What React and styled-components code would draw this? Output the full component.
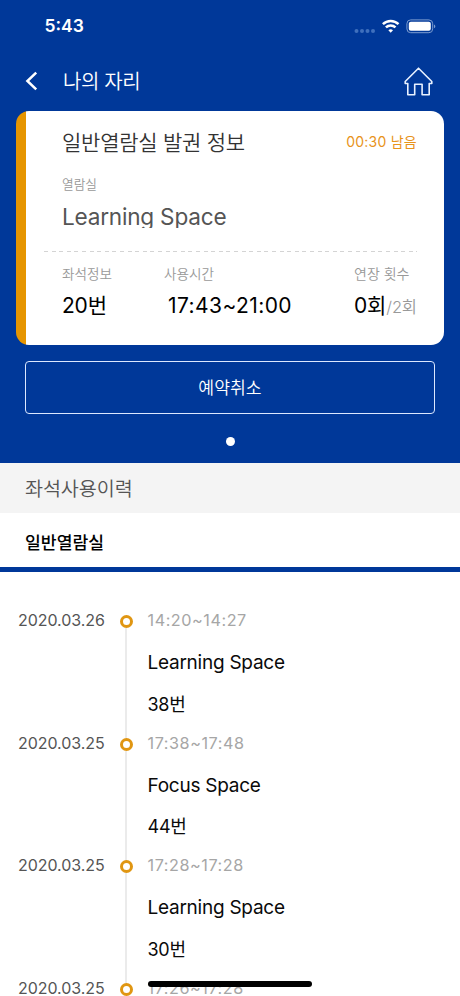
import React from "react";
import styled, { createGlobalStyle } from "styled-components";

const GlobalStyle = createGlobalStyle`
  * {
    box-sizing: border-box;
    margin: 0;
    padding: 0;
  }

  body {
    background: #fff;
    font-family: Inter, "Noto Sans CJK KR", sans-serif;
    color: #0a0a0a;
  }
`;

const Screen = styled.div`
  position: relative;
  width: 460px;
  height: 996px;
  overflow: hidden;
  background: #fff;
`;

const Top = styled.header`
  height: 463px;
  background: #003899;
  color: #fff;
`;

const StatusBar = styled.div`
  display: flex;
  justify-content: space-between;
  align-items: center;
  height: 51px;
  padding: 0 24px 0 44.5px;
`;

const Clock = styled.span`
  font-size: 17.5px;
  line-height: 20px;
  font-weight: 600;
`;

const NavBar = styled.nav`
  display: flex;
  align-items: center;
  height: 60px;
  padding: 0 27px 0 25px;
`;

const NavTitle = styled.h1`
  flex: 1;
  margin-left: 25px;
  padding-top: 2px;
  font-size: 20px;
  line-height: 28px;
  font-weight: 350;
  letter-spacing: -0.4px;
`;

const Card = styled.section`
  width: 428px;
  height: 234px;
  margin-left: 16px;
  padding: 17px 27px 0 28px;
  border-radius: 13px;
  background: linear-gradient(90deg, #e69500 9.6px, #fff 9.6px);
`;

const CardHead = styled.div`
  display: flex;
  justify-content: space-between;
  align-items: center;
  height: 30px;
  padding-left: 18px;
`;

const CardTitle = styled.h2`
  font-size: 21px;
  line-height: 30px;
  font-weight: 350;
  letter-spacing: -0.25px;
  color: #333;
`;

const Remaining = styled.span`
  padding-bottom: 2px;
  font-size: 14px;
  line-height: 20px;
  letter-spacing: 0.25px;
  color: #e8931a;
`;

const Label = styled.div`
  font-size: ${(props) => props.$size || 13.6}px;
  line-height: 20px;
  font-weight: 350;
  color: #999;
`;

const Room = styled.div`
  padding: 17px 0 0 18px;
`;

const RoomName = styled.div`
  height: 25px;
  margin-top: 8px;
  overflow: hidden;
  font-size: 22.6px;
  line-height: 27.6px;
  letter-spacing: -0.22px;
  color: #555;
`;

const Dashes = styled.div`
  height: 1px;
  margin-top: 22.5px;
  background: repeating-linear-gradient(90deg, #d4d4d4 0 4px, transparent 4px 7.6px);
`;

const Details = styled.div`
  display: grid;
  grid-template-columns: 102px 1fr 63px;
  padding: 12.5px 0 0 18px;
`;

const Value = styled.div`
  margin-top: 7px;
  padding-left: ${(props) => props.$indent || 0}px;
  font-size: 21px;
  line-height: 30px;
  letter-spacing: ${(props) => props.$spacing || 0}px;
  white-space: nowrap;
  color: #000;

  small {
    font-size: 16.5px;
    font-weight: 350;
    color: #999;
  }
`;

const CancelButton = styled.button`
  display: block;
  width: 410px;
  height: 53px;
  margin: 16px 0 0 25px;
  padding-bottom: 2px;
  border: 1px solid #dce8ff;
  border-radius: 4px;
  background: transparent;
  font-family: inherit;
  font-size: 17.2px;
  font-weight: 350;
  color: #fff;
`;

const PageDot = styled.div`
  width: 9px;
  height: 9px;
  margin: 22.5px 0 0 225.5px;
  border-radius: 50%;
  background: #fff;
`;

const HistoryTitle = styled.h2`
  height: 50px;
  padding-left: 25px;
  background: #f4f4f4;
  font-size: 19.6px;
  line-height: 52px;
  font-weight: 350;
  letter-spacing: -0.1px;
  color: #555;
`;

const Tab = styled.div`
  height: 59px;
  padding-left: 25px;
  border-bottom: 5px solid #003899;
  font-size: 17.2px;
  line-height: 60px;
  font-weight: 500;
  color: #000;
`;

const History = styled.ul`
  padding: 34px 0 0 18px;
  list-style: none;
`;

const Entry = styled.li`
  display: grid;
  grid-template-columns: 102px 13px 1fr;
  height: 122.5px;
`;

const EntryDate = styled.span`
  font-size: 16px;
  line-height: 28px;
  letter-spacing: -0.06px;
  color: #555;
`;

const Rail = styled.div`
  height: 122.5px;
  padding-top: 9px;

  &::after {
    content: "";
    display: block;
    width: 2px;
    height: 110px;
    margin-left: 5px;
    background: #ebebeb;
  }
`;

const Ring = styled.div`
  width: 13px;
  height: 13px;
  border: 3px solid #e09612;
  border-radius: 50%;
  background: #fff;
`;

const EntryBody = styled.div`
  padding-left: 14.5px;
`;

const EntryTime = styled.div`
  font-size: 16.2px;
  line-height: 28px;
  letter-spacing: 0.55px;
  color: #a6a6a6;
`;

const EntryText = styled.div`
  margin-top: 14px;
  font-size: ${(props) => props.$size || 19}px;
  line-height: 29px;
  letter-spacing: -0.25px;

  & + & {
    margin-top: 12.5px;
  }
`;

const HomeIndicator = styled.div`
  position: absolute;
  left: 148px;
  bottom: 9px;
  width: 164px;
  height: 6px;
  border-radius: 3px;
  background: #000;
`;

const entries = [
  { date: "2020.03.26", time: "14:20~14:27", room: "Learning Space", seat: "38번" },
  { date: "2020.03.25", time: "17:38~17:48", room: "Focus Space", seat: "44번" },
  { date: "2020.03.25", time: "17:28~17:28", room: "Learning Space", seat: "30번" },
  { date: "2020.03.25", time: "17:26~17:28", room: "", seat: "" },
];

const StatusIcons = () => (
  <svg width="82" height="16" viewBox="354 17 82 16" fill="#fff">
    <g fill="#3f70bd">
      <circle cx="356.5" cy="30" r="2" />
      <circle cx="362" cy="30" r="2" />
      <circle cx="367.5" cy="30" r="2" />
      <circle cx="373" cy="30" r="2" />
    </g>
    <g fill="none" stroke="#fff" strokeWidth="2.5">
      <path d="M382.9 23.2a11.2 11.2 0 0 1 15.6 0" />
      <path d="M385.9 26.4a6.9 6.9 0 0 1 9.6 0" />
    </g>
    <path d="M390.7 31.7l-2.3-2.4a3.3 3.3 0 0 1 4.6 0z" />
    <rect x="406.9" y="18.9" width="25.8" height="12.8" rx="3.8" fill="none" stroke="#7d9dd0" />
    <rect x="408.8" y="20.8" width="22" height="9" rx="2" />
    <path d="M434 23.4c1.8.6 1.8 3.2 0 3.8z" fill="#7d9dd0" />
  </svg>
);

const BackIcon = () => (
  <svg width="13" height="20" viewBox="0 0 13 20" fill="none" stroke="#fff" strokeWidth="2.5">
    <path d="M11.2 1.6L2.4 10l8.8 8.4" />
  </svg>
);

const HomeIcon = () => (
  <svg width="29" height="29" viewBox="0 0 29 29" fill="none" stroke="#e8f1ff" strokeWidth="1.6" strokeLinejoin="round">
    <path d="M14.5 1.2L1.2 14.5v2h2.6v11.3h6.9V17.2h7.4v10.6h7.1V16.5h2.6v-2z" />
  </svg>
);

const App = () => {
  return (
    <>
      <GlobalStyle />
      <Screen>
        <Top>
          <StatusBar>
            <Clock>5:43</Clock>
            <StatusIcons />
          </StatusBar>
          <NavBar>
            <BackIcon />
            <NavTitle>나의 자리</NavTitle>
            <HomeIcon />
          </NavBar>
          <Card>
            <CardHead>
              <CardTitle>일반열람실 발권 정보</CardTitle>
              <Remaining>00:30 남음</Remaining>
            </CardHead>
            <Room>
              <Label $size={12.7}>열람실</Label>
              <RoomName>Learning Space</RoomName>
            </Room>
            <Dashes />
            <Details>
              <div>
                <Label>좌석정보</Label>
                <Value $spacing={-0.2}>20번</Value>
              </div>
              <div>
                <Label>사용시간</Label>
                <Value $indent={4} $spacing={0.42}>17:43~21:00</Value>
              </div>
              <div>
                <Label $size={14}>연장 횟수</Label>
                <Value $spacing={-0.15}>
                  0회<small>/2회</small>
                </Value>
              </div>
            </Details>
          </Card>
          <CancelButton>예약취소</CancelButton>
          <PageDot />
        </Top>
        <HistoryTitle>좌석사용이력</HistoryTitle>
        <Tab>일반열람실</Tab>
        <History>
          {entries.map((entry, i) => (
            <Entry key={i}>
              <EntryDate>{entry.date}</EntryDate>
              <Rail>
                <Ring />
              </Rail>
              <EntryBody>
                <EntryTime>{entry.time}</EntryTime>
                <EntryText>{entry.room}</EntryText>
                <EntryText $size={18}>{entry.seat}</EntryText>
              </EntryBody>
            </Entry>
          ))}
        </History>
        <HomeIndicator />
      </Screen>
    </>
  );
};

export default App;
